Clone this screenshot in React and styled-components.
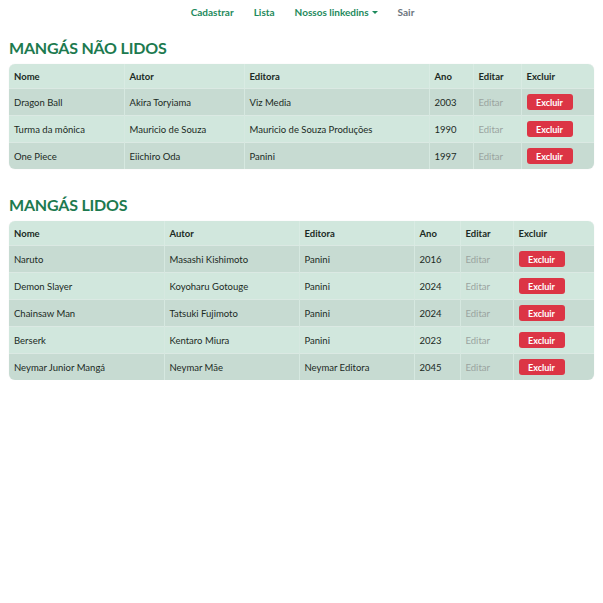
import React from 'react'
import styled, { createGlobalStyle } from 'styled-components'

const GlobalStyle = createGlobalStyle`
  body {
    margin: 0;
    background: #fff;
    font-family: Lato, "Noto Sans", sans-serif;
    color: #212529;
  }
`

const Nav = styled.nav`
  display: flex;
  justify-content: center;
  align-items: center;
  gap: 20px;
  height: 24px;
  padding-left: 2px;
`
const NavLink = styled.span`
  font-size: 10px;
  font-weight: 700;
  color: ${(p) => (p.$muted ? '#6c757d' : '#1d8a5c')};
  display: inline-flex;
  align-items: center;
  gap: 3px;
`
const Caret = styled.span`
  width: 0;
  height: 0;
  border-left: 3px solid transparent;
  border-right: 3px solid transparent;
  border-top: 3px solid currentColor;
  margin-top: 1px;
`
const Page = styled.main`
  padding: 0 9px;
  display: flex;
  flex-direction: column;
`
const Title = styled.h2`
  margin: ${(p) => p.$top}px 0 6px;
  font-size: 16px;
  font-weight: 700;
  color: #1d7a4f;
  line-height: 20px;
  letter-spacing: -0.2px;
`
const TableWrap = styled.div`
  border-radius: 6px;
  overflow: hidden;
  box-shadow: 0 0 1px rgba(0, 0, 0, 0.15);
`
const Table = styled.table`
  width: 100%;
  border-collapse: collapse;
  table-layout: fixed;
  font-size: 9.5px;
  color: #1b2a24;
`
const Col = styled.col`
  width: ${(p) => p.$w}px;
`
const Th = styled.th`
  text-align: left;
  font-weight: 700;
  background: #d1e7dd;
  padding: 0 5px;
  height: 24px;
  border-left: 1px solid #d9ebe3;
  &:first-child {
    border-left: none;
  }
`
const Row = styled.tr`
  background: ${(p) => (p.$odd ? '#c7dbd2' : '#d1e7dd')};
  border-top: 1px solid #dbe9e3;
`
const Td = styled.td`
  padding: 0 5px;
  height: 26px;
  border-left: 1px solid #d6e8e0;
  white-space: nowrap;
  &:first-child {
    border-left: none;
  }
`
const EditLink = styled.span`
  color: #9aa39f;
`
const DeleteButton = styled.button`
  background: #dc3545;
  color: #fff;
  border: none;
  border-radius: 3px;
  font-family: inherit;
  font-size: 9px;
  font-weight: 700;
  width: 46px;
  height: 16px;
  padding: 0;
  vertical-align: middle;
`

const naoLidos = [
  ['Dragon Ball', 'Akira Toryiama', 'Viz Media', '2003'],
  ['Turma da mônica', 'Mauricio de Souza', 'Mauricio de Souza Produções', '1990'],
  ['One Piece', 'Eiichiro Oda', 'Panini', '1997'],
]
const lidos = [
  ['Naruto', 'Masashi Kishimoto', 'Panini', '2016'],
  ['Demon Slayer', 'Koyoharu Gotouge', 'Panini', '2024'],
  ['Chainsaw Man', 'Tatsuki Fujimoto', 'Panini', '2024'],
  ['Berserk', 'Kentaro Miura', 'Panini', '2023'],
  ['Neymar Junior Mangá', 'Neymar Mãe', 'Neymar Editora', '2045'],
]

const MangaTable = ({ rows, widths }) => (
  <TableWrap>
    <Table>
      <colgroup>
        {widths.map((w, i) => (
          <Col key={i} $w={w} />
        ))}
      </colgroup>
      <thead>
        <tr>
          <Th>Nome</Th>
          <Th>Autor</Th>
          <Th>Editora</Th>
          <Th>Ano</Th>
          <Th>Editar</Th>
          <Th>Excluir</Th>
        </tr>
      </thead>
      <tbody>
        {rows.map((r, i) => (
          <Row key={r[0]} $odd={i % 2 === 0}>
            {r.map((c) => (
              <Td key={c}>{c}</Td>
            ))}
            <Td>
              <EditLink>Editar</EditLink>
            </Td>
            <Td>
              <DeleteButton>Excluir</DeleteButton>
            </Td>
          </Row>
        ))}
      </tbody>
    </Table>
  </TableWrap>
)

export default function App() {
  return (
    <>
      <GlobalStyle />
      <Nav>
        <NavLink>Cadastrar</NavLink>
        <NavLink>Lista</NavLink>
        <NavLink>
          Nossos linkedins <Caret />
        </NavLink>
        <NavLink $muted>Sair</NavLink>
      </Nav>
      <Page>
        <Title $top={14}>MANGÁS NÃO LIDOS</Title>
        <MangaTable rows={naoLidos} widths={[115, 120, 185, 44, 48, 73]} />
        <Title $top={26}>MANGÁS LIDOS</Title>
        <MangaTable rows={lidos} widths={[155, 135, 115, 46, 53, 81]} />
      </Page>
    </>
  )
}
